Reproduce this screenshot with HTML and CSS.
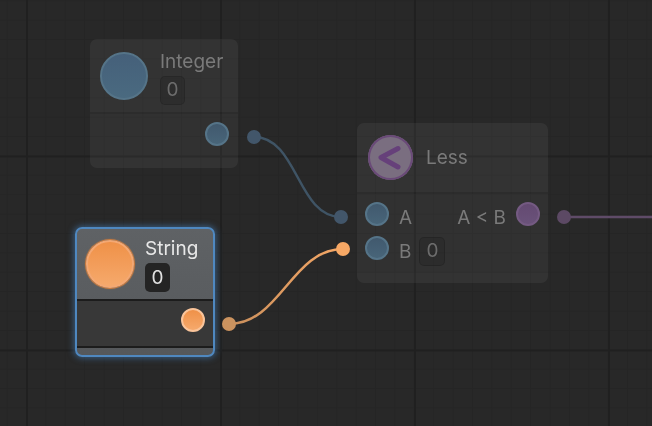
FILE: index.html
```html
<!DOCTYPE html>
<html lang="en">
<head>
<meta charset="utf-8">
<title>Node graph</title>
<link rel="stylesheet" href="styles.css">
</head>
<body>
<main class="canvas">
  <article class="node dim node-integer">
    <header class="node-head">
      <span class="icon icon-blue"></span>
      <div class="head-text">
        <span class="title">Integer</span>
        <span class="field">0</span>
      </div>
    </header>
    <section class="node-body body-out">
      <span class="port port-blue"></span>
    </section>
  </article>

  <article class="node dim node-less">
    <header class="node-head">
      <span class="icon icon-purple">
        <svg class="less-glyph" viewBox="0 0 45 45" width="45" height="45"><path d="M30 13.5 L13 22.5 L30 32" fill="none" stroke="#66407a" stroke-width="5" stroke-linecap="round" stroke-linejoin="round"/></svg>
      </span>
      <span class="title">Less</span>
    </header>
    <section class="node-body less-body">
      <div class="col">
        <div class="row"><span class="port port-blue"></span><span class="label">A</span></div>
        <div class="row"><span class="port port-blue"></span><span class="label">B</span><span class="field field-inline">0</span></div>
      </div>
      <div class="row"><span class="label">A &lt; B</span><span class="port port-purple"></span></div>
    </section>
  </article>

  <article class="node selected node-string">
    <header class="node-head">
      <span class="icon icon-orange"></span>
      <div class="head-text">
        <span class="title">String</span>
        <span class="field">0</span>
      </div>
    </header>
    <section class="node-body body-out">
      <span class="port port-orange"></span>
    </section>
  </article>

  <svg class="wires" width="652" height="426" viewBox="0 0 652 426">
    <defs>
      <linearGradient id="orangeWire" gradientUnits="userSpaceOnUse" x1="229" y1="0" x2="343" y2="0">
        <stop offset="0" stop-color="#c98f5c"/>
        <stop offset="1" stop-color="#f5a766"/>
      </linearGradient>
    </defs>
    <path d="M254 137 C298 137 297 217 341 217" fill="none" stroke="#3f5465" stroke-width="2.5"/>
    <circle cx="254" cy="137" r="7" fill="#42566a"/>
    <circle cx="341" cy="217" r="7" fill="#42566a"/>
    <path d="M564 217 L652 217" fill="none" stroke="#5f4b68" stroke-width="2.5"/>
    <circle cx="564" cy="217" r="7" fill="#5c4964"/>
    <path d="M229 324 C280 324 292 249 343 249" fill="none" stroke="url(#orangeWire)" stroke-width="2.5"/>
    <circle cx="229" cy="324" r="7" fill="#cb935f"/>
    <circle cx="343" cy="249" r="7" fill="#f7a865"/>
  </svg>
</main>
</body>
</html>
```

FILE: styles.css
```css
* { box-sizing: border-box; }
html, body { margin: 0; padding: 0; }
body { width: 652px; height: 426px; overflow: hidden; background: #282828; font-family: Inter, "Liberation Sans", sans-serif; }

.canvas {
  position: relative;
  width: 652px;
  height: 426px;
  background-color: #282828;
  background-image:
    linear-gradient(to right, #202020 1.5px, transparent 1.5px),
    linear-gradient(to bottom, #202020 1.5px, transparent 1.5px),
    linear-gradient(to right, #252525 1px, transparent 1px),
    linear-gradient(to bottom, #252525 1px, transparent 1px);
  background-size: 194px 194px, 194px 194px, 19.4px 19.4px, 19.4px 19.4px;
  background-position: 26px 0, 0 -38.5px, 6.6px 0, 0 -38.5px;
  filter: blur(.35px);
}

.wires { position: absolute; left: 0; top: 0; pointer-events: none; }

.node {
  position: absolute;
  display: flex;
  flex-direction: column;
  border-radius: 7px;
  font-size: 19px;
  line-height: 22px;
}
.node-integer { left: 90px; top: 39px; width: 148px; height: 129px; }
.node-less { left: 357px; top: 123px; width: 191px; height: 160px; }
.node-string { left: 75px; top: 227px; width: 140px; height: 130px; }

.dim {
  background: rgba(255, 255, 255, .055);
  color: #7a7a7a;
  padding-bottom: 10px;
}
.dim .node-body { background: rgba(0, 0, 0, .03); border-top: 2px solid rgba(0, 0, 0, .1); }
.dim .field { background: rgba(0, 0, 0, .1); border: 1px solid rgba(0, 0, 0, .14); color: #6c6c6c; }

.selected {
  border: 2px solid #4f88c0;
  box-shadow: 0 0 6px 1px rgba(70, 130, 190, .6);
  background: linear-gradient(#5f6265, #55585b);
  padding-bottom: 7px;
  color: #e8e8e8;
}
.selected .node-head { height: 70px; padding-left: 9px; gap: 11px; }
.selected .head-text { padding-top: 2px; }
.selected .node-body { border-top: 2px solid #1c1c1c; border-bottom: 2px solid #1c1c1c; background: #383838; padding-right: 8px; }

.node-head { display: flex; align-items: center; height: 73px; padding-left: 10px; gap: 12px; flex: none; }
.node-integer .head-text { padding-top: 4px; }
.node-less .node-head { height: 69px; padding-left: 11px; gap: 13px; }

.head-text { display: flex; flex-direction: column; align-items: flex-start; gap: 3px; }
.title { display: block; }

.field {
  display: inline-flex;
  align-items: center;
  justify-content: center;
  width: 25px;
  height: 29px;
  border-radius: 5px;
  background: #242424;
  color: #e0e0e0;
}
.field-inline { width: 26px; margin-top: 6px; margin-left: -2px; }

.icon { display: flex; align-items: center; justify-content: center; flex: none; border-radius: 50%; }
.icon-blue, .icon-orange { width: 48px; height: 48px; }
.icon-purple { width: 45px; height: 45px; background: #7a6e80; box-shadow: inset 0 0 0 2px #6a4a78; }
.less-glyph { flex: none; }
.icon-orange { background: linear-gradient(#ef9148, #f6a96c); border: 2px solid #f4a873; box-shadow: 0 0 1px 1px #d9803c; }
.icon-blue { background: linear-gradient(#45607a, #4a6a80); border: 2px solid #557488; }

.body-out { flex: 1; display: flex; justify-content: flex-end; align-items: center; padding-right: 9px; padding-bottom: 4px; }
.selected .body-out { padding-bottom: 8px; }

.node-body { display: flex; }
.less-body { flex: 1; justify-content: space-between; padding: 8px 8px 0 8px; align-items: flex-start; }
.col { display: flex; flex-direction: column; gap: 10px; }
.row { display: flex; align-items: center; gap: 10px; height: 24px; }
.label { display: block; margin-top: 8px; }

.port { display: block; flex: none; width: 24px; height: 24px; border-radius: 50%; }
.port-orange { background: linear-gradient(#ef9148, #f6a96c); border: 2px solid #fac49a; }
.port-blue { background: linear-gradient(#41596e, #486579); border: 2px solid #557488; }
.port-purple { background: linear-gradient(#644a72, #6a527a); border: 2px solid #745a82; }
```
